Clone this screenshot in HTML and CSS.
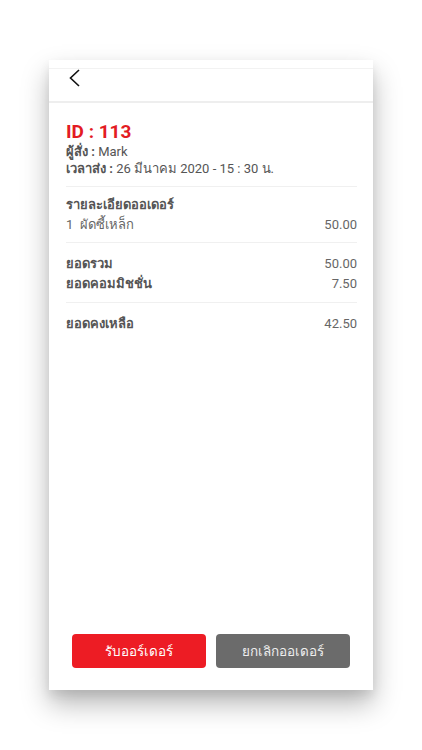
FILE: index.html
```html
<!DOCTYPE html>
<html lang="th">
<head>
    <meta charset="UTF-8">
    <meta name="viewport" content="width=device-width, initial-scale=1.0">
    <title>Order 113</title>
    <link rel="stylesheet" href="styles.css">
</head>
<body>

    <div class="screen">
        <header class="topbar">
            <svg class="back" width="14" height="18" viewBox="0 0 14 18">
                <path d="M12 1 L3.5 9 L12 17" fill="none" stroke="#111" stroke-width="1.6"/>
            </svg>
        </header>

        <section class="order">
            <h1 class="order-id">ID : 113</h1>
            <p class="meta"><b>ผู้สั่ง :</b> Mark</p>
            <p class="meta"><b>เวลาส่ง :</b> 26 มีนาคม 2020 - 15 : 30 น.</p>
        </section>

        <section class="block first">
            <p class="label">รายละเอียดออเดอร์</p>
            <div class="row">
                <span>1&nbsp;&nbsp;ผัดซี้เหล็ก</span>
                <span class="num">50.00</span>
            </div>
        </section>

        <section class="block">
            <div class="row">
                <span class="label">ยอดรวม</span>
                <span class="num">50.00</span>
            </div>
            <div class="row">
                <span class="label">ยอดคอมมิชชั่น</span>
                <span class="num">7.50</span>
            </div>
        </section>

        <section class="block last">
            <div class="row">
                <span class="label">ยอดคงเหลือ</span>
                <span class="num">42.50</span>
            </div>
        </section>

        <div class="actions">
            <button class="btn accept">รับออร์เดอร์</button>
            <button class="btn cancel">ยกเลิกออเดอร์</button>
        </div>
    </div>

</body>
</html>
```

FILE: styles.css
```css
body, html {
    margin: 0;
    padding: 0;
    background: #fff;
    font-family: Roboto, "Noto Sans", sans-serif;
}

body {
    padding-top: 60px;
    min-height: 750px;
    box-sizing: border-box;
}

/* Phone card */
.screen {
    width: 324px;
    height: 630px;
    margin-left: 49px;
    background: #fff;
    box-shadow: 0 14px 26px rgba(0, 0, 0, 0.28), 0 6px 10px rgba(0, 0, 0, 0.08);
    display: flex;
    flex-direction: column;
}

.topbar {
    height: 32px;
    margin-top: 8px;
    border-top: 1px solid #f2f2f2;
    border-bottom: 2px solid #eeeeee;
    padding-left: 18px;
    display: flex;
    align-items: flex-start;
}

.order {
    margin: 0 16px 0 17px;
    padding: 18px 0 9px;
    border-bottom: 1px solid #f0f0f0;
}

.order-id {
    margin: 0;
    font-size: 19px;
    line-height: 22px;
    color: #e31b23;
    font-weight: 700;
}

.meta {
    margin: 0;
    font-size: 13px;
    line-height: 17px;
    color: #555;
}

.meta b {
    font-weight: 700;
}

.block {
    margin: 0 16px 0 17px;
    padding: 11px 0 8px;
    border-bottom: 1px solid #f0f0f0;
}

.block.first {
    padding: 8px 0 7px;
}

.block.last {
    border-bottom: none;
}

.label {
    margin: 0;
    font-size: 13px;
    line-height: 20px;
    font-weight: 700;
    color: #555;
}

.row {
    display: flex;
    justify-content: space-between;
    font-size: 13px;
    line-height: 20px;
    color: #666;
}

.num {
    color: #666;
}

/* Bottom buttons */
.actions {
    margin-top: auto;
    padding: 0 23px 22px;
    display: flex;
    gap: 10px;
}

.btn {
    flex: 1;
    height: 34px;
    border: none;
    border-radius: 4px;
    color: #fff;
    font-family: inherit;
    font-size: 13.5px;
}

.accept {
    background: #ed1c24;
}

.cancel {
    background: #6b6b6b;
    color: #eee;
}
```
